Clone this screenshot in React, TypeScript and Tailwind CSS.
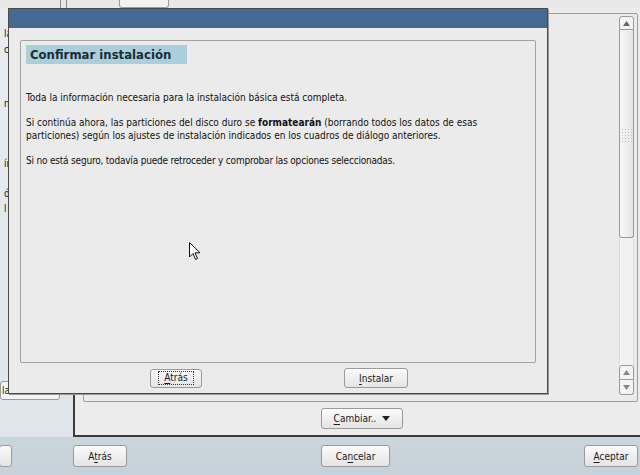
import React from "react";

const font = { fontFamily: '"DejaVu Sans Condensed", "DejaVu Sans", "Liberation Sans", sans-serif' };

const Btn = ({
  children,
  className = "",
  focus = false
}: {
  children: React.ReactNode;
  className?: string;
  focus?: boolean;
}) => (
  <div
    className={`flex items-center justify-center rounded-[3px] border border-[#9a9a9a] bg-gradient-to-b from-[#fbfbfb] to-[#e4e4e4] text-[10px] text-[#1a1a1a] ${className}`}
  >
    {focus ? (
      <span className="border border-dotted border-[#333] px-[5px] leading-[12px]">{children}</span>
    ) : (
      children
    )}
  </div>
);

const U = ({ children }: { children: React.ReactNode }) => <span className="underline underline-offset-2">{children}</span>;

export default function App() {
  return (
    <div
      className="relative w-[640px] h-[475px] overflow-hidden bg-gradient-to-b from-[#eceeef] via-[#e4e8eb] to-[#c6d1d9] flex flex-col [font-stretch:condensed]"
      style={font}
    >
      {/* background installer screen */}
      <div className="h-[8px] flex bg-[#e8e8e8] shrink-0">
        <div className="ml-[60px] w-[7px] border-x border-[#8a8a8a]" />
        <div className="ml-[52px] w-[50px] border-x border-b border-[#9a9a9a] rounded-b-[3px] bg-[#f2f2f2]" />
      </div>
      <div className="flex h-[429px] shrink-0">
        <div className="w-[73px] flex flex-col text-[10px] text-[#222] bg-gradient-to-b from-[#eaedef] to-[#dfe5ea]">
          <div className="pl-[4px] pt-[18px] leading-[16px]">la</div>
          <div className="pl-[4px] leading-[16px]">ci</div>
          <div className="pl-[4px] mt-[38px] leading-[16px]">n</div>
          <div className="pl-[4px] mt-[44px] leading-[16px]">ín</div>
          <div className="pl-[4px] mt-[14px] leading-[16px]">ór</div>
          <div className="pl-[4px] leading-[14px]">l H</div>
          <div className="mt-auto mb-[37px] w-[60px] h-[19px] border border-[#9a9a9a] rounded-[3px] bg-[#f4f4f4] pl-[1px] leading-[17px]">la</div>
        </div>
        <div className="flex-1 flex flex-col border-l-2 border-b-2 border-[#3a3a3a] bg-[#ececec]">
          <div className="mt-[5px] ml-[8px] mr-[2px] h-[389px] border border-[#9c9c9c] rounded-[2px] flex justify-end pr-[3px] pt-[2px] pb-[6px] bg-[#ebebeb]">
            <div className="w-[15px] flex flex-col">
              <div className="h-[14px] border border-[#9a9a9a] rounded-t-[3px] bg-[#f4f4f4] flex items-center justify-center">
                <svg width="7" height="5" viewBox="0 0 7 5"><path d="M0 5 L3.5 0 L7 5 Z" fill="#666" /></svg>
              </div>
              <div className="h-[208px] border-x border-b border-[#9a9a9a] rounded-b-[3px] bg-gradient-to-r from-[#f7f7f7] to-[#e6e6e6] flex items-end justify-center pb-[95px]">
                <div className="grid grid-cols-4 gap-[2px]">
                  {Array.from({ length: 20 }).map((_, i) => (
                    <div key={i} className="w-[1px] h-[1px] bg-[#bbbbbb]" />
                  ))}
                </div>
              </div>
              <div className="flex-1 bg-[#f1f1f1] border-x border-[#dcdcdc]" />
              <div className="h-[15px] border border-[#9a9a9a] rounded-t-[3px] bg-[#f4f4f4] flex items-center justify-center">
                <svg width="7" height="5" viewBox="0 0 7 5"><path d="M0 5 L3.5 0 L7 5 Z" fill="#888" /></svg>
              </div>
              <div className="h-[15px] border-x border-b border-[#9a9a9a] rounded-b-[3px] bg-[#f4f4f4] flex items-center justify-center">
                <svg width="7" height="5" viewBox="0 0 7 5"><path d="M0 0 L3.5 5 L7 0 Z" fill="#888" /></svg>
              </div>
            </div>
          </div>
          <div className="flex-1 flex items-center pl-[246px]">
            <Btn className="w-[82px] h-[21px] gap-[6px]">
              <span><U>C</U>ambiar..</span>
              <svg width="8" height="5" viewBox="0 0 8 5"><path d="M0 0 L8 0 L4 5 Z" fill="#222" /></svg>
            </Btn>
          </div>
        </div>
      </div>
      <div className="flex-1 flex items-center">
        <Btn className="w-[13px] h-[22px] -ml-[1px]">{""}</Btn>
        <Btn className="ml-[61px] w-[54px] h-[22px]">
          <span>A<U>t</U>rás</span>
        </Btn>
        <Btn className="ml-[194px] w-[69px] h-[22px]">
          <span>Ca<U>n</U>celar</span>
        </Btn>
        <Btn className="ml-auto mr-[2px] w-[54px] h-[22px]">
          <span><U>A</U>ceptar</span>
        </Btn>
      </div>

      {/* confirmation dialog */}
      <div className="absolute left-[8px] top-[8px] w-[540px] h-[386px] border border-[#4a4a4a] bg-[#ebebeb] flex flex-col shadow-[1px_1px_0_#999]">
        <div className="h-[19px] bg-[#45698f] shrink-0" />
        <div className="mt-[12px] mx-[11px] h-[323px] border border-[#a2a2a2] rounded-[2px] px-[5px] pt-[4px] text-[10px] text-[#111]">
          <div className="inline-block bg-[#aacfdc] pl-[4px] pr-[16px] h-[19px] leading-[19px] text-[13px] font-bold text-[#1c2b38]">
            Confirmar instalación
          </div>
          <p className="mt-[27px] leading-[13px]">
            Toda la información necesaria para la instalación básica está completa.
          </p>
          <p className="mt-[12px] leading-[13px]">
            Si continúa ahora, las particiones del disco duro se <b>formatearán</b> (borrando todos los datos de esas
            <br />
            particiones) según los ajustes de instalación indicados en los cuadros de diálogo anteriores.
          </p>
          <p className="mt-[12px] leading-[13px] tracking-[-0.2px]">
            Si no está seguro, todavía puede retroceder y comprobar las opciones seleccionadas.
          </p>
        </div>
        <div className="flex-1 flex items-center">
          <Btn focus className="ml-[141px] w-[52px] h-[19px]">
            <span><U>A</U>trás</span>
          </Btn>
          <Btn className="ml-[142px] w-[64px] h-[20px]">
            <span><U>I</U>nstalar</span>
          </Btn>
        </div>
      </div>

      {/* mouse pointer */}
      <svg className="absolute left-[189px] top-[242px]" width="12" height="19" viewBox="0 0 12 19">
        <path d="M0.5 0.5 L0.5 15 L4 11.5 L6.5 17.5 L8.5 16.5 L6 10.8 L11 10.8 Z" fill="#fff" stroke="#111" strokeWidth="1" />
      </svg>
    </div>
  );
}
